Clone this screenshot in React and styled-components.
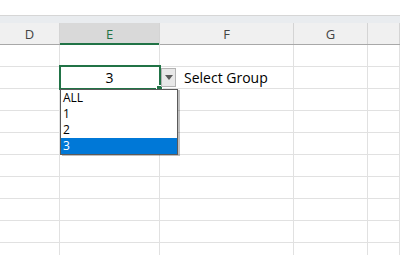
import React from "react";
import styled, { createGlobalStyle } from "styled-components";

// Page reset
const GlobalStyle = createGlobalStyle`
    html, body {
        margin: 0;
        padding: 0;
        background: #ffffff;
        overflow: hidden;
    }
    body {
        font-family: "Open Sans", "Noto Sans", sans-serif;
    }
`;

const COLUMNS = "60px 100px 134px 74px 1fr";
const GRID = "#e1e1e1";

const columns = [
    { name: "D", active: false },
    { name: "E", active: true },
    { name: "F", active: false },
    { name: "G", active: false },
    { name: "", active: false },
];

const options = ["ALL", "1", "2", "3"];

const App = () => {
    const rows = Array.from({ length: 10 }, (_, i) => i);

    return (
        <>
            <GlobalStyle />
            <Sheet>
                <TopBar />
                <Band />
                <HeaderRow>
                    {columns.map((col, i) => (
                        <HeaderCell key={i} $active={col.active}>{col.name}</HeaderCell>
                    ))}
                </HeaderRow>
                {rows.map(r => (
                    <Row key={r}>
                        <Cell />
                        {r === 1 ? (
                            <SelectedCell>
                                <CellValue>3</CellValue>
                                <Focus>
                                    <FillHandle />
                                </Focus>
                                <DropButton>
                                    <svg width="8" height="5" viewBox="0 0 8 5">
                                        <path d="M0 0 H8 L4 5 Z" fill="#5a5a5a" />
                                    </svg>
                                </DropButton>
                                <List>
                                    {options.map(opt => (
                                        <Option key={opt} $selected={opt === "3"}>{opt}</Option>
                                    ))}
                                </List>
                            </SelectedCell>
                        ) : (
                            <Cell />
                        )}
                        {r === 1 ? <LabelCell>Select Group</LabelCell> : <Cell />}
                        <Cell />
                        <Cell />
                    </Row>
                ))}
            </Sheet>
        </>
    );
};

const Sheet = styled.div`
    width: 400px;
    height: 255px;
    display: flex;
    flex-direction: column;
    overflow: hidden;
`;

const TopBar = styled.div`
    height: 15px;
    flex-shrink: 0;
    background: #ffffff;
    border-bottom: 1px solid #d6d6d6;
`;

const Band = styled.div`
    height: 7px;
    flex-shrink: 0;
    background: #e9ecef;
`;

const HeaderRow = styled.div`
    display: grid;
    grid-template-columns: ${COLUMNS};
    height: 21px;
    flex-shrink: 0;
    background: #f0f0f0;
    border-bottom: 1px solid #a8a8a8;
`;

const HeaderCell = styled.div`
    display: flex;
    align-items: center;
    justify-content: center;
    font-size: 13px;
    color: ${p => (p.$active ? "#217346" : "#444444")};
    background: ${p => (p.$active ? "#d9d9d9" : "transparent")};
    border-right: 1px solid #d4d4d4;
    box-shadow: ${p => (p.$active ? "inset 0 -2px 0 #217346" : "none")};
    margin-bottom: ${p => (p.$active ? "-1px" : "0")};
`;

const Row = styled.div`
    display: grid;
    grid-template-columns: ${COLUMNS};
    height: 22px;
    flex-shrink: 0;
    box-sizing: border-box;
    border-bottom: 1px solid ${GRID};
`;

const Cell = styled.div`
    border-right: 1px solid ${GRID};
`;

const SelectedCell = styled(Cell)`
    position: relative;
    display: flex;
    align-items: center;
    justify-content: center;
    z-index: 2;
`;

const CellValue = styled.span`
    font-size: 14px;
    color: #000000;
`;

const Focus = styled.div`
    position: absolute;
    left: -1px;
    top: -2px;
    right: -2px;
    bottom: -2px;
    border: 2px solid #217346;
`;

const FillHandle = styled.div`
    position: absolute;
    right: -4px;
    bottom: -4px;
    width: 5px;
    height: 5px;
    background: #217346;
    border: 1px solid #ffffff;
`;

const DropButton = styled.div`
    position: absolute;
    left: 101px;
    top: 1px;
    width: 15px;
    height: 19px;
    box-sizing: border-box;
    background: #e8e8e8;
    border: 1px solid #b4b4b4;
    display: flex;
    align-items: center;
    justify-content: center;
`;

const List = styled.div`
    position: absolute;
    left: 0;
    top: 22px;
    width: 118px;
    box-sizing: border-box;
    background: #ffffff;
    border: 1px solid #5a5a5a;
    box-shadow: 2px 1px 0 rgba(0, 0, 0, 0.25);
    display: flex;
    flex-direction: column;
`;

const Option = styled.div`
    height: 16px;
    line-height: 16px;
    padding-left: 2px;
    font-size: 12px;
    color: ${p => (p.$selected ? "#ffffff" : "#000000")};
    background: ${p => (p.$selected ? "#0078d7" : "transparent")};
`;

const LabelCell = styled(Cell)`
    display: flex;
    align-items: center;
    padding-left: 24px;
    font-size: 14px;
    color: #000000;
`;

export default App;
